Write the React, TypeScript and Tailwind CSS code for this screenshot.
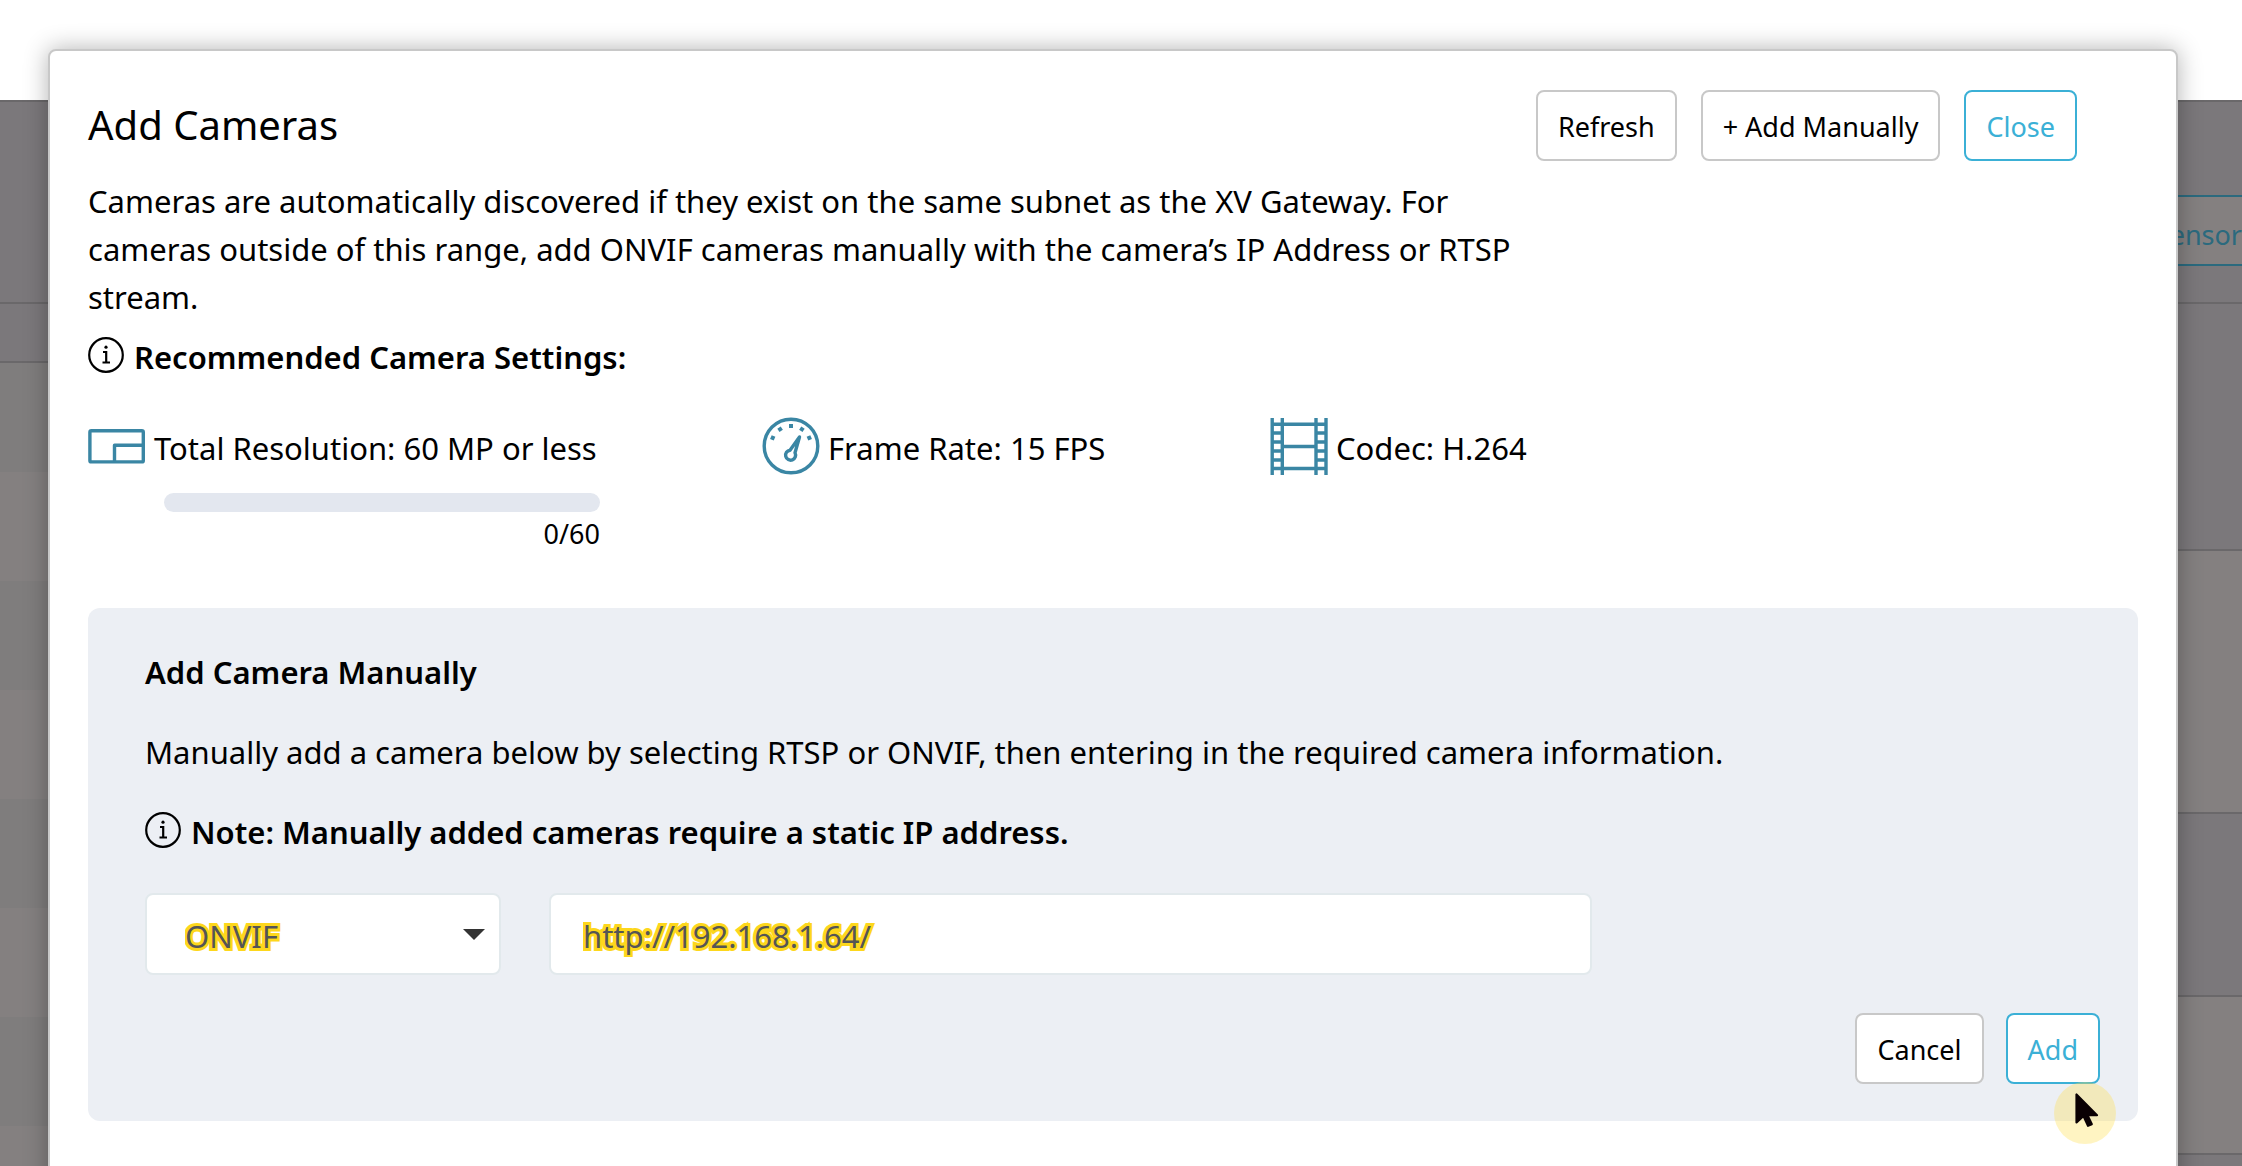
import { useState, type ReactNode } from 'react'
import { clsx } from 'clsx'

const leftRows = [0, 1, 2, 3, 4, 5, 6, 7]

const InfoIcon = () => (
  <svg viewBox="0 0 38 38" className="mb-1 size-[38px] shrink-0" fill="none" stroke="currentColor" strokeWidth="2.2">
    <circle cx="18" cy="19" r="16.8" />
    <path d="M15 16h3.200v10.500M14.500 26.500h7.500" />
    <circle cx="18" cy="11.200" r="1.600" fill="currentColor" stroke="none" />
  </svg>
)

const ResolutionIcon = () => (
  <svg viewBox="0 0 58 58" className="size-[58px]" fill="none" stroke="#3a86a4" strokeWidth="3.4" strokeLinejoin="round">
    <rect x="1.9" y="13.7" width="53.4" height="31.2" rx="1.5" />
    <path d="M26.5 44.5V28.2h28.8" />
  </svg>
)

const GaugeIcon = () => (
  <svg viewBox="0 0 58 58" className="size-[58px]" fill="none" stroke="#3a86a4" strokeWidth="3.4">
    <circle cx="29" cy="29" r="26.8" />
    <g fill="#3a86a4" stroke="none">
      <path d="M27 7h4v4h-4z" />
      <path d="M27 7h4v4h-4z" transform="rotate(-33 29 29)" />
      <path d="M27 7h4v4h-4z" transform="rotate(33 29 29)" />
      <path d="M27 7h4v4h-4z" transform="rotate(-66 29 29)" />
      <path d="M27 7h4v4h-4z" transform="rotate(66 29 29)" />
    </g>
    <path d="M37.5 20 28 33.2a5 5 0 1 0 5 2.6Z" strokeLinejoin="round" />
  </svg>
)

const FilmIcon = () => (
  <svg viewBox="0 0 58 58" className="size-[58px]" fill="none" stroke="#3a86a4" strokeWidth="3.4">
    <path d="M2.2 1v57M12.3 1v57M46 1v57M56 1v57" />
    <path d="M2 7.2h54M2 51.5h54M12 29.5h34" />
    <path d="M2 16h10M2 25h10M2 34h10M2 43h10M46 16h10M46 25h10M46 34h10M46 43h10" />
  </svg>
)

const Button = ({ primary, children }: { primary?: boolean, children: ReactNode }) => (
  <button
    type="button"
    className={clsx(
      'h-[71px] rounded-lg border-2 bg-white px-5 pt-1 text-[27px] whitespace-nowrap',
      primary ? 'border-[#3bb0d6] text-[#3bb0d6]' : 'border-[#c8c8c8] text-black'
    )}
  >
    {children}
  </button>
)

const Setting = ({ icon, children }: { icon: ReactNode, children: ReactNode }) => (
  <div className="flex items-center gap-2">
    {icon}
    <span className="pt-1 text-[31px] leading-[54px] whitespace-nowrap">{children}</span>
  </div>
)

// Dimmed page that stays visible behind the dialog
const Backdrop = () => (
  <div aria-hidden="true" className="flex h-screen flex-col overflow-hidden">
    <div className="h-[100px] shrink-0 bg-white" />
    <div className="flex flex-1 justify-between border-t-2 border-[#6a686a] bg-[#7b787b]">
      <div className="w-1/2">
        <div className="h-[202px] border-b-2 border-[#6a686a]" />
        <div className="h-[59px] border-b-2 border-[#6a686a]" />
        {leftRows.map(i => (
          <div key={i} className="h-[109px] odd:bg-[#7f7d7d] even:bg-[#848080]" />
        ))}
      </div>
      <div className="w-1/2">
        <div className="flex h-[202px] justify-end border-b-2 border-[#6a686a] pt-[93px]">
          <div className="h-[71px] w-72 border-y-2 border-[#2b6a7e] bg-[#848080] pt-1 text-right text-[27px] leading-[67px] text-[#2b6a7e]">
            Add Sensor
          </div>
        </div>
        <div className="h-[247px] border-b-2 border-[#6a686a]" />
        <div className="h-[263px] border-b-2 border-[#6a686a] bg-[#848080]" />
        <div className="h-[183px] border-b-2 border-[#6a686a]" />
        <div className="h-[158px] border-b-2 border-[#6a686a] bg-[#848080]" />
      </div>
    </div>
  </div>
)

export default function App() {
  const [protocol, setProtocol] = useState('ONVIF')
  const [address, setAddress] = useState('http://192.168.1.64/')

  return (
    <div className="relative h-screen overflow-hidden font-['Noto_Sans','Open_Sans',sans-serif] text-black">
      <Backdrop />
      <div className="absolute inset-0 flex pt-[49px] pr-16 pl-12">
        <main
          role="dialog"
          aria-labelledby="dialog-title"
          className="h-[120vh] flex-1 rounded-lg border-2 border-[#c8c8c8] bg-white px-[38px] pt-[39px] shadow-[0_0_24px_rgba(0,0,0,0.3)]"
        >
          <header className="flex items-start justify-between pr-[61px]">
            <h1 id="dialog-title" className="text-[40px] leading-[70px]">Add Cameras</h1>
            <div className="flex gap-6">
              <Button>Refresh</Button>
              <Button>+ Add Manually</Button>
              <Button primary>Close</Button>
            </div>
          </header>

          <p className="mt-4 max-w-[1450px] text-[31px] leading-[48px]">
            Cameras are automatically discovered if they exist on the same subnet as the XV Gateway. For cameras
            outside of this range, add ONVIF cameras manually with the camera’s IP Address or RTSP stream.
          </p>

          <h2 className="mt-3 flex items-center gap-2 text-[31px] leading-[48px] font-semibold">
            <InfoIcon />
            Recommended Camera Settings:
          </h2>

          <section className="mt-9 flex items-start">
            <div className="w-[674px]">
              <div className="w-[512px]">
                <Setting icon={<ResolutionIcon />}>Total Resolution: 60 MP or less</Setting>
                <div
                  role="progressbar"
                  aria-label="Total resolution used"
                  aria-valuenow={0}
                  aria-valuemax={60}
                  className="mt-[18px] ml-[76px] h-[19px] rounded-full bg-[#e3e7ef]"
                />
                <p className="text-right text-[27px] leading-[44px]">0/60</p>
              </div>
            </div>
            <div className="w-[508px]">
              <Setting icon={<GaugeIcon />}>Frame Rate: 15 FPS</Setting>
            </div>
            <Setting icon={<FilmIcon />}>Codec: H.264</Setting>
          </section>

          <form
            onSubmit={e => e.preventDefault()}
            className="mt-[52px] rounded-xl bg-[#eceff4] pt-10 pr-[38px] pb-[37px] pl-[57px]"
          >
            <h2 className="text-[31px] leading-[48px] font-semibold">Add Camera Manually</h2>
            <p className="mt-8 text-[31px] leading-[48px]">
              Manually add a camera below by selecting RTSP or ONVIF, then entering in the required camera information.
            </p>
            <p className="mt-8 flex items-center gap-2 text-[31px] leading-[48px] font-semibold">
              <InfoIcon />
              Note: Manually added cameras require a static IP address.
            </p>

            <div className="mt-[37px] flex gap-12">
              <div className="relative">
                <select
                  aria-label="Camera protocol"
                  value={protocol}
                  onChange={e => setProtocol(e.target.value)}
                  className="h-[82px] w-[356px] appearance-none rounded-lg border-2 border-[#e2e9ec] bg-white pt-1 pl-[38px] text-[31px] text-[#555] [-webkit-text-stroke:6px_#fdd71c] [paint-order:stroke]"
                >
                  <option>ONVIF</option>
                  <option>RTSP</option>
                </select>
                <svg viewBox="0 0 22 11" className="pointer-events-none absolute top-9 right-4 h-[11px] w-[22px]">
                  <path d="M0 0h22L11 11z" fill="#333" />
                </svg>
              </div>
              <input
                type="text"
                aria-label="Camera address"
                value={address}
                onChange={e => setAddress(e.target.value)}
                className="h-[82px] w-[1043px] rounded-lg border-2 border-[#e2e9ec] bg-white px-8 pt-1 text-[31px] text-[#555] [-webkit-text-stroke:6px_#fdd71c] [paint-order:stroke]"
              />
            </div>

            <div className="mt-[38px] flex justify-end gap-[22px]">
              <Button>Cancel</Button>
              <div className="relative">
                <Button primary>Add</Button>
                <svg viewBox="0 0 62 62" className="pointer-events-none absolute -right-4 -bottom-[60px] size-[62px]">
                  <circle cx="31" cy="31" r="31" fill="#ffdf4f" fillOpacity="0.35" />
                  <path
                    d="M22.500 12.500v28l7-6.500 4.500 9.800 3.800-1.600-4.300-9h9.500z"
                    fill="#0a0003"
                    stroke="#0a0003"
                    strokeWidth="2.2"
                    strokeLinejoin="round"
                  />
                </svg>
              </div>
            </div>
          </form>
        </main>
      </div>
    </div>
  )
}
